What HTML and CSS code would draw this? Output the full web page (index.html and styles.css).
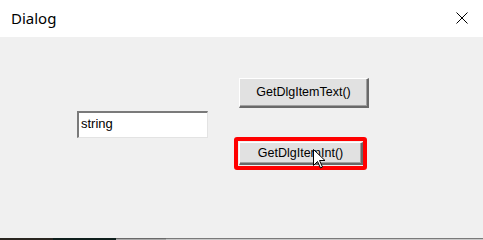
FILE: index.html
```html
<!DOCTYPE html>
<html>
<head>
<meta charset="utf-8">
<link rel="stylesheet" href="styles.css">
</head>
<body>
<div class="window">
  <div class="titlebar">
    <span class="title">Dialog</span>
    <svg class="close" width="12" height="12" viewBox="0 0 12 12"><path d="M0.5 0.5 L11.5 11.5 M11.5 0.5 L0.5 11.5" stroke="#000" stroke-width="1" fill="none"/></svg>
  </div>
  <div class="client">
    <div class="left-col">
      <div class="edit">string</div>
    </div>
    <div class="right-col">
      <div class="btn btn-text">GetDlgItemText()</div>
      <div class="highlight">
        <div class="btn btn-int">GetDlgItemInt()</div>
        <svg class="cursor" width="13" height="20" viewBox="0 0 13 20"><path d="M0.5 0.5 L0.5 16.5 L4.5 12.5 L7.5 19 L9.5 18 L6.5 11.5 L12 11.5 Z" fill="#fff" stroke="#000" stroke-width="1" stroke-linejoin="miter"/></svg>
      </div>
    </div>
  </div>
  <div class="taskbar">
    <div class="tb tb1"></div>
    <div class="tb tb2"></div>
    <div class="tb tb3"></div>
    <div class="tb tb4"></div>
  </div>
</div>
</body>
</html>
```
FILE: styles.css
```css
html, body {
  margin: 0;
  padding: 0;
}
body {
  width: 483px;
  height: 240px;
  overflow: hidden;
  background: #f0f0f0;
}
.window {
  width: 483px;
  height: 240px;
  display: flex;
  flex-direction: column;
}
.titlebar {
  height: 37px;
  background: #ffffff;
  display: flex;
  align-items: center;
  justify-content: space-between;
  padding: 0 15px 0 11px;
  box-sizing: border-box;
}
.title {
  font-family: "Noto Sans", "Open Sans", sans-serif;
  font-size: 15px;
  color: #000;
  margin-top: -2px;
}
.close {
  display: block;
  margin-top: -1px;
}
.client {
  flex: 1;
  background: #f0f0f0;
  display: flex;
  padding-left: 77px;
}
.left-col {
  padding-top: 74px;
}
.edit {
  width: 131px;
  height: 27px;
  box-sizing: border-box;
  background: #fff;
  border-style: solid;
  border-width: 2px 1px 1px 2px;
  border-color: #7a7a7a #e3e3e3 #e3e3e3 #7a7a7a;
  font-family: "Liberation Sans", Arial, sans-serif;
  font-size: 13px;
  color: #000;
  line-height: 22px;
  padding-left: 2px;
}
.right-col {
  margin-left: 26px;
  padding-top: 41px;
  display: flex;
  flex-direction: column;
}
.btn {
  box-sizing: border-box;
  background: #e1e1e1;
  border-style: solid;
  border-width: 1px 2px 2px 1px;
  border-color: #fff #696969 #696969 #fff;
  box-shadow: inset -1px -1px 0 #a0a0a0;
  font-family: "Liberation Sans", Arial, sans-serif;
  font-size: 12.5px;
  color: #000;
  text-align: center;
}
.btn-text {
  margin-left: 5px;
  width: 130px;
  height: 30px;
  line-height: 27px;
}
.highlight {
  position: relative;
  margin-top: 29px;
  width: 133px;
  height: 33px;
  box-sizing: border-box;
  border: 4px solid #f00;
  border-radius: 3px;
  padding: 1px 0 0 1px;
}
.btn-int {
  width: 124px;
  height: 23px;
  line-height: 20px;
}
.cursor {
  position: absolute;
  left: 75px;
  top: 8px;
}
.taskbar {
  height: 2px;
  display: flex;
}
.tb { height: 2px; }
.tb1 { width: 53px; background: #2a2620; }
.tb2 { width: 63px; background: #0f1f1c; }
.tb3 { width: 50px; background: #a9a9a9; border-top: 1px solid #6a6a6a; box-sizing: border-box; }
.tb4 { flex: 1; background: #c8c8c8; border-top: 1px solid #7a7a7a; box-sizing: border-box; }
```
